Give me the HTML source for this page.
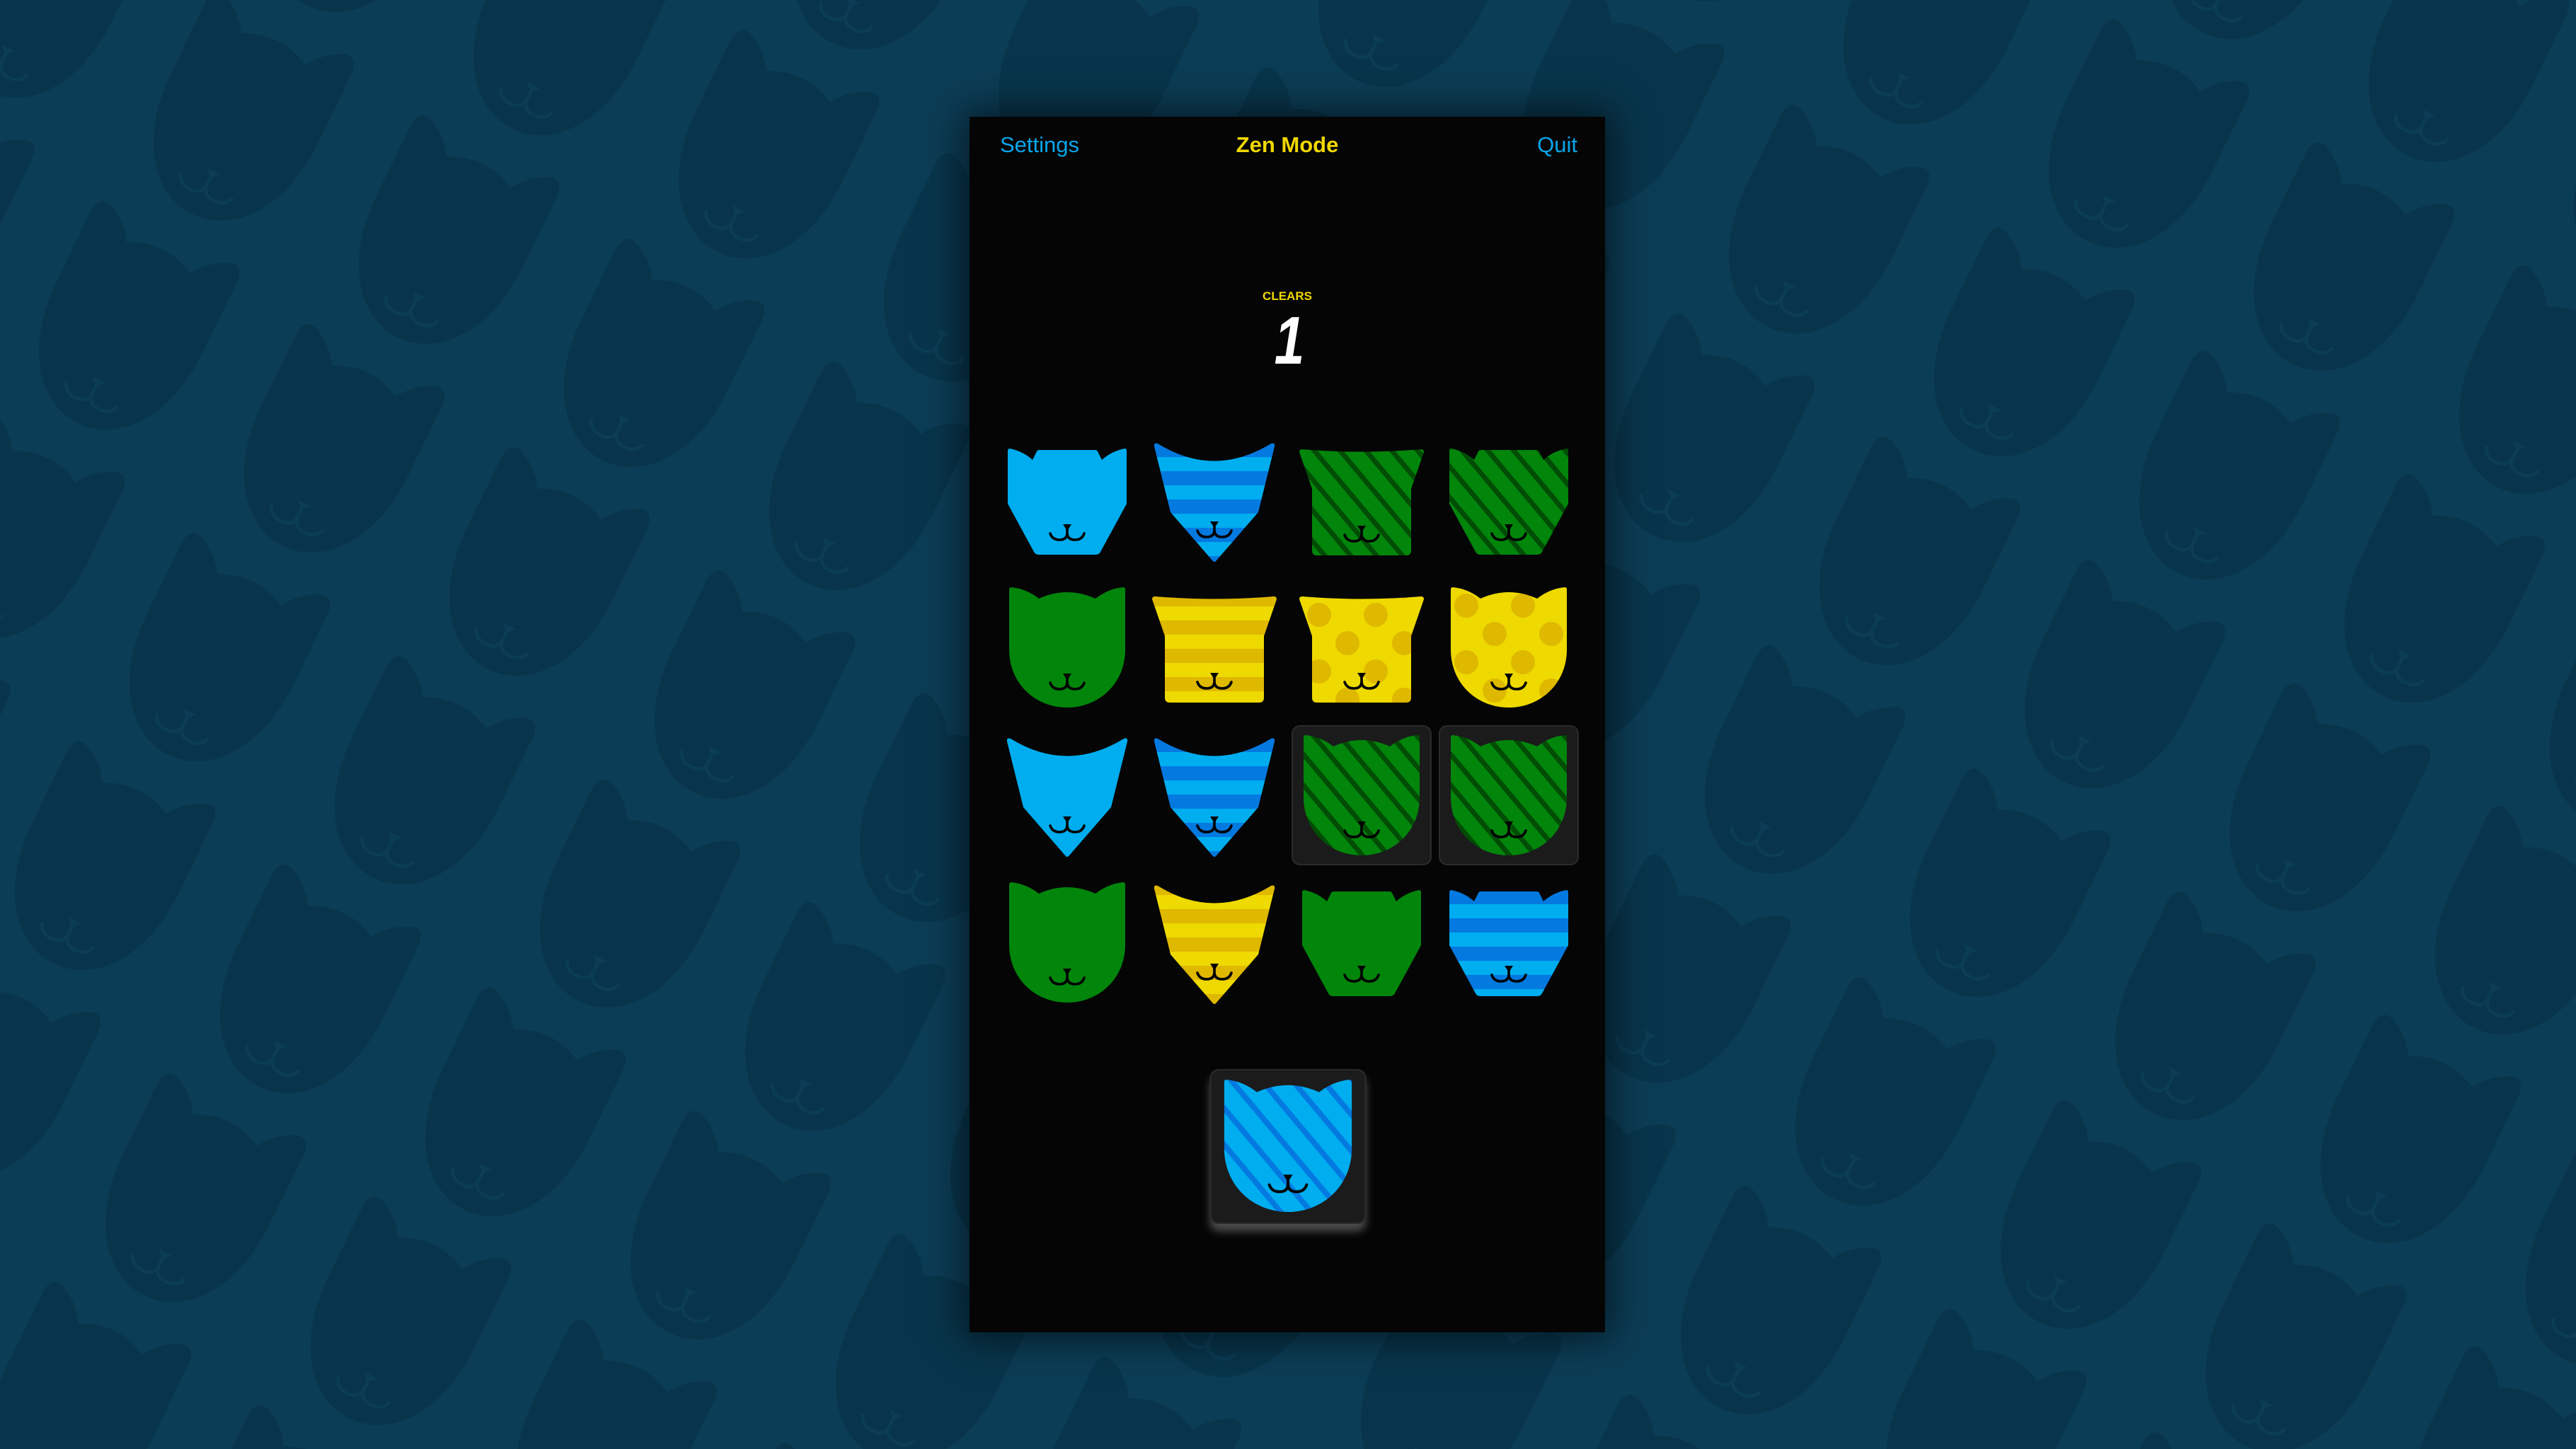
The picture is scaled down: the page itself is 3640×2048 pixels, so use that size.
<!DOCTYPE html>
<html><head><meta charset="utf-8">
<style>
html,body{margin:0;padding:0;width:3640px;height:2048px;overflow:hidden;background:#0c3d56;}
#bg{position:absolute;left:0;top:0;}
#panel{position:absolute;left:1370px;top:165px;width:898px;height:1718px;background:#050505;box-shadow:0 0 50px 10px rgba(0,0,0,0.55);}
#panel svg{position:absolute;left:0;top:0;}
.box{position:absolute;background:#1b1b1b;border:2px solid #2b2b2b;border-radius:12px;box-sizing:border-box;}
</style></head>
<body>
<svg id="bg" width="3640" height="2048" viewBox="0 0 3640 2048" xmlns="http://www.w3.org/2000/svg">
<defs>
<g id="bgcat">
 <g transform="rotate(26)">
  <path d="M -115,-20 L -115,-130 Q -113,-155 -95,-150 Q -68,-140 -50,-112 Q 0,-138 50,-112 Q 68,-140 95,-150 Q 113,-155 115,-130 L 115,-20 C 115,85 62,148 0,148 C -62,148 -115,85 -115,-20 Z" fill="#08354b"/>
  <g transform="translate(0,80) scale(1.7)" fill="none" stroke="#0c3d56" stroke-width="2.6">
   <path d="M0,2 L0,12 Q0,22 -11,22 Q-21,22 -24,13 M0,12 Q0,22 11,22 Q21,22 24,13"/>
   <path d="M-6,0 L6,0 L0,6 Z" fill="#0c3d56" stroke="none"/>
  </g>
 </g>
</g>
<pattern id="bgp" patternUnits="userSpaceOnUse" x="0" y="0" width="100" height="100" patternTransform="translate(337,170) matrix(2.9,1.74,-1.62,2.95,0,0)">
 <g transform="translate(-100,-100) matrix(0.25937,-0.15298,0.14243,0.25497,0,0)"><use href="#bgcat"/></g>
 <g transform="translate(0,-100) matrix(0.25937,-0.15298,0.14243,0.25497,0,0)"><use href="#bgcat"/></g>
 <g transform="translate(100,-100) matrix(0.25937,-0.15298,0.14243,0.25497,0,0)"><use href="#bgcat"/></g>
 <g transform="translate(200,-100) matrix(0.25937,-0.15298,0.14243,0.25497,0,0)"><use href="#bgcat"/></g>
 <g transform="translate(-100,0) matrix(0.25937,-0.15298,0.14243,0.25497,0,0)"><use href="#bgcat"/></g>
 <g transform="translate(0,0) matrix(0.25937,-0.15298,0.14243,0.25497,0,0)"><use href="#bgcat"/></g>
 <g transform="translate(100,0) matrix(0.25937,-0.15298,0.14243,0.25497,0,0)"><use href="#bgcat"/></g>
 <g transform="translate(200,0) matrix(0.25937,-0.15298,0.14243,0.25497,0,0)"><use href="#bgcat"/></g>
 <g transform="translate(-100,100) matrix(0.25937,-0.15298,0.14243,0.25497,0,0)"><use href="#bgcat"/></g>
 <g transform="translate(0,100) matrix(0.25937,-0.15298,0.14243,0.25497,0,0)"><use href="#bgcat"/></g>
 <g transform="translate(100,100) matrix(0.25937,-0.15298,0.14243,0.25497,0,0)"><use href="#bgcat"/></g>
 <g transform="translate(200,100) matrix(0.25937,-0.15298,0.14243,0.25497,0,0)"><use href="#bgcat"/></g>
 <g transform="translate(-100,200) matrix(0.25937,-0.15298,0.14243,0.25497,0,0)"><use href="#bgcat"/></g>
 <g transform="translate(0,200) matrix(0.25937,-0.15298,0.14243,0.25497,0,0)"><use href="#bgcat"/></g>
 <g transform="translate(100,200) matrix(0.25937,-0.15298,0.14243,0.25497,0,0)"><use href="#bgcat"/></g>
 <g transform="translate(200,200) matrix(0.25937,-0.15298,0.14243,0.25497,0,0)"><use href="#bgcat"/></g>
</pattern>
</defs>
<rect width="3640" height="2048" fill="#0c3d56"/>
<rect width="3640" height="2048" fill="url(#bgp)"/>
</svg>

<div id="panel">
 <div class="box" style="left:455px;top:860px;width:198px;height:198px;"></div>
 <div class="box" style="left:663px;top:860px;width:198px;height:198px;"></div>
 <div class="box" style="left:340px;top:1346px;width:220px;height:219px;box-shadow:0 10px 12px rgba(140,140,140,0.55);"></div>
<svg width="898" height="1718" viewBox="0 0 898 1718" xmlns="http://www.w3.org/2000/svg">
<defs>
 <path id="pA" d="M -82,3 Q -82,0 -79,0 Q -58,2 -40,16 Q 0,-2 40,16 Q 58,2 79,0 Q 82,0 82,3 L 82,88 C 82,136 45,170 0,170 C -45,170 -82,136 -82,88 Z"/>
 <path id="pB" d="M -84,3 Q -84,0 -81,0 Q -62,4 -49,16 L -43,4 Q -42,2 -39,2 L 39,2 Q 42,2 43,4 L 49,16 Q 62,4 81,0 Q 84,0 84,3 L 84,78 L 47,146 Q 45,150 40,150 L -40,150 Q -45,150 -47,146 L -84,78 Z"/>
 <path id="pC" d="M -88,4 Q -88,0 -84,0 Q 0,7 84,0 Q 88,0 88,4 L 70,56 L 70,143 Q 70,150 63,150 L -63,150 Q -70,150 -70,143 L -70,56 Z"/>
 <path id="pD" d="M -85,5 Q -86,-1 -80,1 Q 0,50 80,1 Q 86,-1 85,5 L 62,98 L 3,166 Q 0,170 -3,166 L -62,98 Z"/>
 <clipPath id="cA"><use href="#pA"/></clipPath>
 <clipPath id="cB"><use href="#pB"/></clipPath>
 <clipPath id="cC"><use href="#pC"/></clipPath>
 <clipPath id="cD"><use href="#pD"/></clipPath>
 <g id="smile">
  <path d="M0,4 L0,12 Q0,22 -11,22 Q-21,22 -24,13 M0,12 Q0,22 11,22 Q21,22 24,13" fill="none" stroke="#000" stroke-width="3.6" stroke-linecap="round"/>
  <path d="M-6,0 L6,0 L1.5,7 L-1.5,7 Z" fill="#000"/>
 </g>
 <pattern id="hsB" patternUnits="userSpaceOnUse" width="10" height="40"><rect width="10" height="40" fill="#00adef"/><rect width="10" height="20" fill="#0479e0"/></pattern>
 <pattern id="hsY" patternUnits="userSpaceOnUse" width="10" height="40" y="-6"><rect width="10" height="40" fill="#eed900"/><rect width="10" height="20" fill="#dfb800"/></pattern>
 <pattern id="dgG" patternUnits="userSpaceOnUse" width="28" height="28" patternTransform="rotate(-40)"><rect width="28" height="28" fill="#02850b"/><rect width="7" height="28" fill="#014d05"/></pattern>
 <pattern id="dgB" patternUnits="userSpaceOnUse" width="30" height="30" patternTransform="rotate(-40)"><rect width="30" height="30" fill="#00adef"/><rect width="7" height="30" fill="#0479e0"/></pattern>
 <pattern id="dtY" patternUnits="userSpaceOnUse" width="80" height="80"><rect width="80" height="80" fill="#eed900"/><circle cx="20" cy="26" r="17" fill="#dfb800"/><circle cx="60" cy="66" r="17" fill="#dfb800"/><circle cx="60" cy="-14" r="17" fill="#dfb800"/></pattern>
</defs>

<text x="43" y="50" font-family="Liberation Sans, sans-serif" font-size="31" fill="#0aa6ea">Settings</text>
<text x="449" y="50" text-anchor="middle" font-family="Liberation Sans, sans-serif" font-weight="bold" font-size="31" fill="#f0d800">Zen Mode</text>
<text x="859" y="50" text-anchor="end" font-family="Liberation Sans, sans-serif" font-size="31" fill="#0aa6ea">Quit</text>
<text x="449" y="259" text-anchor="middle" font-family="Liberation Sans, sans-serif" font-weight="bold" font-size="17" fill="#f0d800">CLEARS</text>
<text x="0" y="0" text-anchor="middle" font-family="Liberation Sans, sans-serif" font-weight="bold" font-style="italic" font-size="96" fill="#ffffff" transform="translate(452,349) scale(0.8,1)">1</text>

<g transform="translate(138,469)"><use href="#pB" fill="#00adef"/><use href="#smile" y="107"/></g>
<g transform="translate(346,461)"><rect x="-100" y="-10" width="200" height="200" fill="url(#hsB)" clip-path="url(#cD)"/><use href="#smile" y="111"/></g>
<g transform="translate(554,470)"><rect x="-100" y="-10" width="200" height="200" fill="url(#dgG)" clip-path="url(#cC)"/><use href="#smile" y="108"/></g>
<g transform="translate(762,469)"><rect x="-100" y="-10" width="200" height="200" fill="url(#dgG)" clip-path="url(#cB)"/><use href="#smile" y="107"/></g>

<g transform="translate(138,665)"><use href="#pA" fill="#02850b"/><use href="#smile" y="122"/></g>
<g transform="translate(346,678)"><rect x="-100" y="-10" width="200" height="200" fill="url(#hsY)" clip-path="url(#cC)"/><use href="#smile" y="108"/></g>
<g transform="translate(554,678)"><rect x="-100" y="-10" width="200" height="200" fill="url(#dtY)" clip-path="url(#cC)"/><use href="#smile" y="108"/></g>
<g transform="translate(762,665)"><rect x="-100" y="-10" width="200" height="200" fill="url(#dtY)" clip-path="url(#cA)"/><use href="#smile" y="122"/></g>

<g transform="translate(138,878)"><use href="#pD" fill="#00adef"/><use href="#smile" y="111"/></g>
<g transform="translate(346,878)"><rect x="-100" y="-10" width="200" height="200" fill="url(#hsB)" clip-path="url(#cD)"/><use href="#smile" y="111"/></g>
<g transform="translate(554,874)"><rect x="-100" y="-10" width="200" height="200" fill="url(#dgG)" clip-path="url(#cA)"/><use href="#smile" y="122"/></g>
<g transform="translate(762,874)"><rect x="-100" y="-10" width="200" height="200" fill="url(#dgG)" clip-path="url(#cA)"/><use href="#smile" y="122"/></g>

<g transform="translate(138,1082)"><use href="#pA" fill="#02850b"/><use href="#smile" y="122"/></g>
<g transform="translate(346,1086)"><rect x="-100" y="-10" width="200" height="200" fill="url(#hsY)" clip-path="url(#cD)"/><use href="#smile" y="111"/></g>
<g transform="translate(554,1093)"><use href="#pB" fill="#02850b"/><use href="#smile" y="107"/></g>
<g transform="translate(762,1093)"><rect x="-100" y="-10" width="200" height="200" fill="url(#hsB)" clip-path="url(#cB)"/><use href="#smile" y="107"/></g>

<g transform="translate(450,1361) scale(1.1)"><rect x="-100" y="-10" width="200" height="200" fill="url(#dgB)" clip-path="url(#cA)"/><use href="#smile" y="122"/></g>
</svg>
</div>
</body></html>
